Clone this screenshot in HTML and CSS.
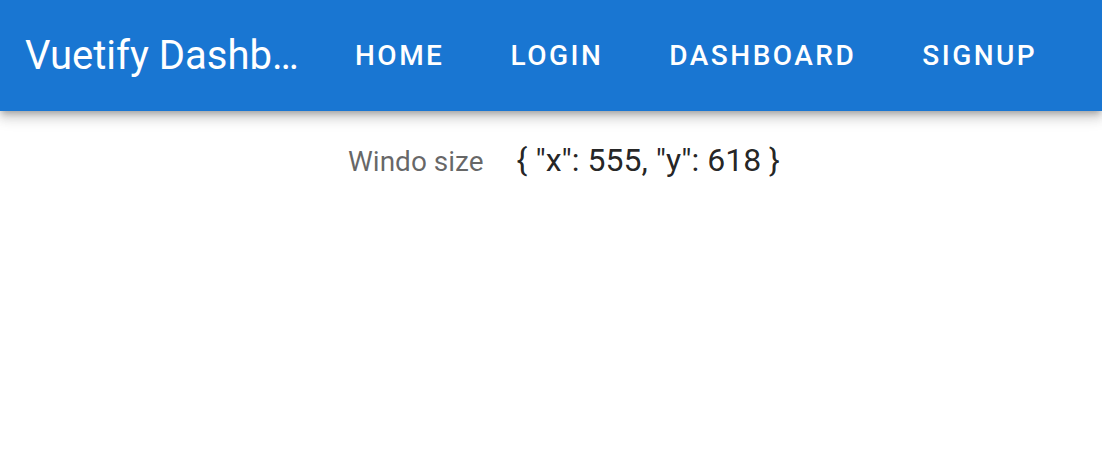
FILE: index.html
```html
<!DOCTYPE html>
<html>
<head>
<meta charset="utf-8">
<link rel="stylesheet" href="styles.css">
</head>
<body>
<header class="toolbar">
  <div class="title">Vuetify Dashboard</div>
  <nav class="nav">
    <a class="btn">Home</a>
    <a class="btn">Login</a>
    <a class="btn">Dashboard</a>
    <a class="btn">Signup</a>
  </nav>
</header>
<main class="content">
  <div class="row">
    <span class="label">Windo size</span>
    <span class="value">{ "x": 555, "y": 618 }</span>
  </div>
</main>
</body>
</html>
```
FILE: styles.css
```css
html, body {
  margin: 0;
  padding: 0;
  background: #fff;
  font-family: Roboto, "Liberation Sans", sans-serif;
}
.toolbar {
  height: 111px;
  background: #1976d2;
  color: #fff;
  display: flex;
  align-items: center;
  padding-left: 25px;
  box-shadow: 0 4px 6px -2px rgba(0,0,0,0.25), 0 7px 10px 1px rgba(0,0,0,0.12), 0 2px 18px 3px rgba(0,0,0,0.08);
  position: relative;
  z-index: 1;
}
.title {
  font-size: 40px;
  font-weight: 400;
  width: 275px;
  white-space: nowrap;
  overflow: hidden;
  text-overflow: ellipsis;
  letter-spacing: 0;
}
.nav {
  display: flex;
  margin-left: 22px;
}
.btn {
  font-size: 28px;
  font-weight: 500;
  text-transform: uppercase;
  letter-spacing: 0.089em;
  padding: 0 33px;
  display: flex;
  align-items: center;
  height: 72px;
}
.content {
  padding-top: 30px;
}
.row {
  display: flex;
  align-items: baseline;
  padding-left: 348px;
  gap: 33px;
}
.label {
  font-size: 28px;
  color: rgba(0,0,0,0.6);
}
.value {
  font-size: 32px;
  color: rgba(0,0,0,0.87);
}
```
